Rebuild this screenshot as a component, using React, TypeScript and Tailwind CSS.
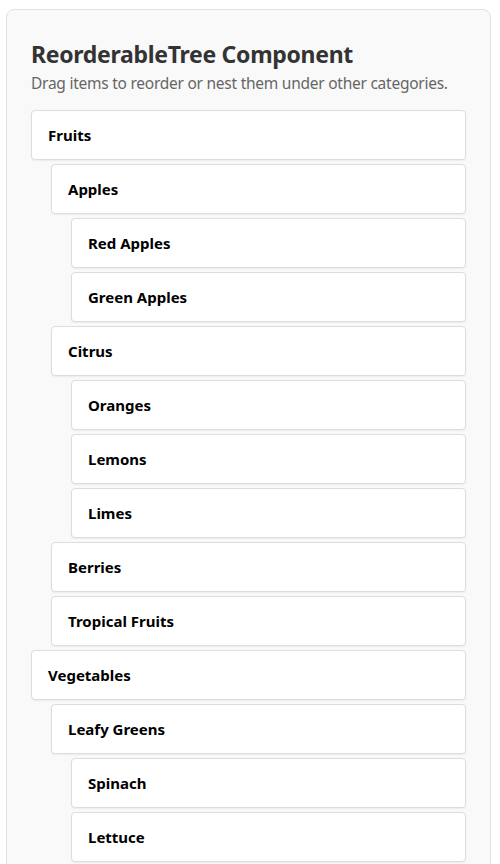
import React from "react";

type Node = { label: string; children?: Node[] };

const tree: Node[] = [
  {
    label: "Fruits",
    children: [
      { label: "Apples", children: [{ label: "Red Apples" }, { label: "Green Apples" }] },
      { label: "Citrus", children: [{ label: "Oranges" }, { label: "Lemons" }, { label: "Limes" }] },
      { label: "Berries" },
      { label: "Tropical Fruits" },
    ],
  },
  {
    label: "Vegetables",
    children: [{ label: "Leafy Greens", children: [{ label: "Spinach" }, { label: "Lettuce" }] }],
  },
];

function TreeItem({ node }: { node: Node }) {
  return (
    <div className="flex flex-col gap-[4px]">
      <div className="flex h-[50px] items-center rounded-[4px] border border-[#dddddd] bg-white px-4 text-[15px] font-bold text-black shadow-[0_1px_2px_rgba(0,0,0,0.06)]">
        {node.label}
      </div>
      {node.children && (
        <div className="flex flex-col gap-[4px] pl-5">
          {node.children.map((c) => (
            <TreeItem key={c.label} node={c} />
          ))}
        </div>
      )}
    </div>
  );
}

export default function App() {
  return (
    <div className="h-[864px] overflow-hidden bg-white pl-[6px] pt-[9px] font-['Noto_Sans',sans-serif]">
      <div className="w-[485px] rounded-[8px] border border-[#e2e2e2] bg-[#f9f9f9] px-6 pb-6 pt-[30px]">
        <h2 className="text-[23px] font-bold leading-[29px] tracking-[-0.3px] text-[#333333]">
          ReorderableTree Component
        </h2>
        <p className="mt-[2px] whitespace-nowrap text-[15.5px] leading-[24px] tracking-[-0.25px] text-[#666666]">
          Drag items to reorder or nest them under other categories.
        </p>
        <div className="mt-[15px] flex flex-col gap-[4px]">
          {tree.map((n) => (
            <TreeItem key={n.label} node={n} />
          ))}
        </div>
      </div>
    </div>
  );
}
